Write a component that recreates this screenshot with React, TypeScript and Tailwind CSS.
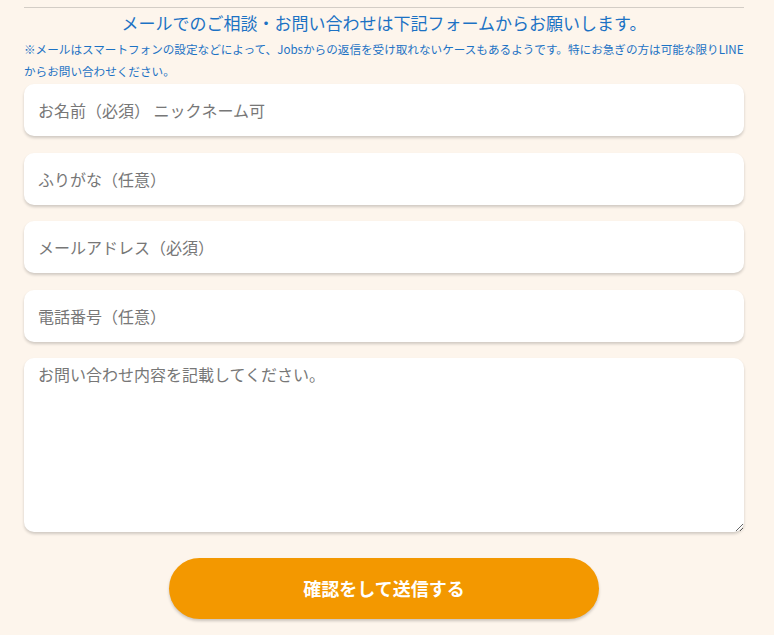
export default function App() {
  const fieldBase =
    'w-full rounded-[10px] bg-white px-[14px] text-[16px] text-[#333] placeholder:text-[#777] shadow-[0_2px_3px_rgba(0,0,0,0.18)] outline-none';

  return (
    <div className="min-h-[635px] w-full bg-[#fdf5ec] px-[24px] font-['Noto_Sans_CJK_JP','Noto_Sans',sans-serif]">
      <div className="w-[720px] pt-[7px]">
        <div className="border-t border-[#d3cdc6]" />
        <h2 className="mt-[3px] text-center text-[17px] leading-[24px] text-[#1c72c4]">
          メールでのご相談・お問い合わせは下記フォームからお願いします。
        </h2>
        <p className="mt-[3px] text-[11.6px] leading-[22px] text-[#1c72c4]">
          ※メールはスマートフォンの設定などによって、Jobsからの返信を受け取れないケースもあるようです。特にお急ぎの方は可能な限りLINE
          <br />
          からお問い合わせください。
        </p>

        <form className="mt-[2px] flex flex-col gap-[16.5px]" onSubmit={(e) => e.preventDefault()}>
          <input type="text" placeholder="お名前（必須） ニックネーム可" className={`${fieldBase} h-[52px]`} />
          <input type="text" placeholder="ふりがな（任意）" className={`${fieldBase} h-[52px]`} />
          <input type="email" placeholder="メールアドレス（必須）" className={`${fieldBase} h-[52px]`} />
          <input type="tel" placeholder="電話番号（任意）" className={`${fieldBase} h-[52px]`} />
          <textarea
            placeholder="お問い合わせ内容を記載してください。"
            className={`${fieldBase} h-[174px] py-[4px] leading-[24px]`}
          />
          <div className="flex justify-center pt-[9px]">
            <button
              type="submit"
              className="h-[61px] w-[430px] rounded-full bg-[#f39800] text-[18px] font-bold text-white shadow-[0_2px_3px_rgba(0,0,0,0.2)]"
            >
              確認をして送信する
            </button>
          </div>
        </form>
      </div>
    </div>
  );
}
